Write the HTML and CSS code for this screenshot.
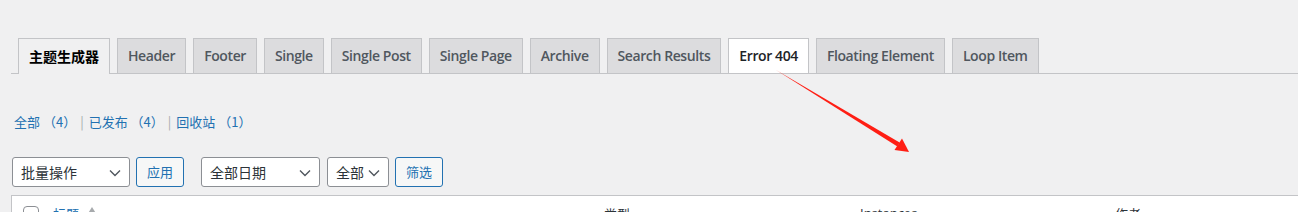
FILE: index.html
```html
<!DOCTYPE html>
<html lang="zh-CN">
<head>
<meta charset="utf-8">
<title>主题生成器</title>
<link rel="stylesheet" href="styles.css">
</head>
<body>
<div class="wrap">
  <nav class="tabs">
    <a class="tab tab-active">主题生成器</a>
    <a class="tab">Header</a>
    <a class="tab">Footer</a>
    <a class="tab">Single</a>
    <a class="tab">Single Post</a>
    <a class="tab">Single Page</a>
    <a class="tab">Archive</a>
    <a class="tab">Search Results</a>
    <a class="tab tab-hover">Error 404</a>
    <a class="tab">Floating Element</a>
    <a class="tab">Loop Item</a>
  </nav>

  <ul class="subsubsub">
    <li><a class="link">全部 <span class="count">（4）</span></a><span class="sep">|</span></li>
    <li><a class="link">已发布 <span class="count">（4）</span></a><span class="sep">|</span></li>
    <li><a class="link">回收站 <span class="count">（1）</span></a></li>
  </ul>

  <div class="filters">
    <div class="select select-bulk"><span>批量操作</span><svg class="chev" width="12" height="8" viewBox="0 0 12 8"><path d="M1 1.5 L6 6.5 L11 1.5" fill="none" stroke="#50575e" stroke-width="1.4"/></svg></div>
    <button class="button">应用</button>
    <div class="select select-date"><span>全部日期</span><svg class="chev" width="12" height="8" viewBox="0 0 12 8"><path d="M1 1.5 L6 6.5 L11 1.5" fill="none" stroke="#50575e" stroke-width="1.4"/></svg></div>
    <div class="select select-type"><span>全部</span><svg class="chev" width="12" height="8" viewBox="0 0 12 8"><path d="M1 1.5 L6 6.5 L11 1.5" fill="none" stroke="#50575e" stroke-width="1.4"/></svg></div>
    <button class="button">筛选</button>
  </div>

  <div class="table">
    <div class="thead">
      <div class="col col-cb"><span class="checkbox"></span></div>
      <div class="col col-title"><a class="sort-link">标题</a><svg class="sort" width="10" height="8" viewBox="0 0 10 8"><path d="M5 0 L10 8 L0 8 Z" fill="#a7aaad"/></svg></div>
      <div class="col col-type">类型</div>
      <div class="col col-inst">Instances</div>
      <div class="col col-author">作者</div>
    </div>
  </div>
</div>

<svg class="arrow" width="1298" height="212" viewBox="0 0 1298 212">
  <polygon points="776,70 899.6,142.6 897.4,146.4" fill="#ff1e14"/>
  <polygon points="909,152 902,138.5 894.5,150" fill="#ff1e14"/>
</svg>
</body>
</html>
```

FILE: styles.css
```css
* { box-sizing: border-box; }

html, body {
  margin: 0;
  padding: 0;
  background: #f0f0f1;
  overflow: hidden;
}

body {
  width: 1298px;
  height: 212px;
  position: relative;
  font-family: "Open Sans", "Noto Sans CJK SC", sans-serif;
  color: #3c434a;
  font-size: 13px;
}

.wrap {
  padding: 38px 0 0 11px;
}

.tabs {
  display: flex;
  border-bottom: 1px solid #c3c4c7;
  margin-right: -20px;
  height: 36px;
}

.tab {
  display: block;
  margin-left: 7px;
  padding: 5px 10px;
  height: 35px;
  border: 1px solid #c3c4c7;
  border-bottom: none;
  background: #dcdcde;
  color: #50575e;
  font-size: 14px;
  line-height: 24px;
  font-weight: 600;
  letter-spacing: -0.4px;
  white-space: nowrap;
  font-family: "Open Sans", "Noto Sans CJK SC", sans-serif;
}

.tab-active {
  background: #f0f0f1;
  color: #000;
  height: 36px;
  margin-bottom: -1px;
  letter-spacing: 0;
  font-family: "Noto Sans CJK SC", sans-serif;
}

.tab-hover {
  background: #fff;
  color: #1d2327;
}

.subsubsub {
  list-style: none;
  margin: 35px 0 0 3px;
  padding: 0;
  font-size: 13px;
  line-height: 26px;
  height: 26px;
  color: #646970;
  font-family: "Noto Sans CJK SC", sans-serif;
  white-space: nowrap;
  display: flex;
}

.subsubsub li {
  display: block;
}

.link {
  color: #2271b1;
}

.sep {
  color: #a7aaad;
  display: inline-block;
  margin: 0 5px 0 4px;
}

.filters {
  margin-top: 22px;
  display: flex;
  align-items: center;
  height: 30px;
  margin-left: 1px;
}

.select {
  height: 30px;
  border: 1px solid #8c8f94;
  border-radius: 3px;
  background: #fff;
  display: flex;
  align-items: center;
  justify-content: space-between;
  padding: 0 8px 0 8px;
  font-size: 14px;
  color: #2c3338;
  font-family: "Noto Sans CJK SC", sans-serif;
}

.select-bulk { width: 118px; }
.select-date { width: 119px; margin-left: 17px; }
.select-type { width: 62px; margin-left: 7px; padding-right: 8px; }

.chev { display: block; margin-top: 1px; }

.button {
  height: 30px;
  margin: 0 0 0 6px;
  padding: 0 10px;
  border: 1px solid #2271b1;
  border-radius: 3px;
  background: #f6f7f7;
  color: #2271b1;
  font-size: 13px;
  line-height: 28px;
  font-family: "Noto Sans CJK SC", sans-serif;
}

.table {
  margin-top: 8px;
  margin-right: -30px;
  background: #fff;
  border: 1px solid #c3c4c7;
  height: 60px;
}

.thead {
  display: grid;
  grid-template-columns: 31px 551px 256px 255px 1fr;
  font-size: 13px;
  line-height: 19px;
  color: #2c3338;
  font-family: "Noto Sans CJK SC", sans-serif;
}

.col {
  padding: 8px 10px;
  display: flex;
  align-items: flex-start;
}

.col-cb {
  padding: 10px 0 0 11px;
}

.checkbox {
  display: block;
  width: 16px;
  height: 16px;
  border: 1px solid #8c8f94;
  border-radius: 4px;
  background: #fff;
}

.sort-link {
  color: #2271b1;
}

.sort {
  margin: 3px 0 0 8px;
}

.col-inst {
  font-family: "Open Sans", sans-serif;
}

.arrow {
  position: absolute;
  left: 0;
  top: 0;
  pointer-events: none;
}
```
